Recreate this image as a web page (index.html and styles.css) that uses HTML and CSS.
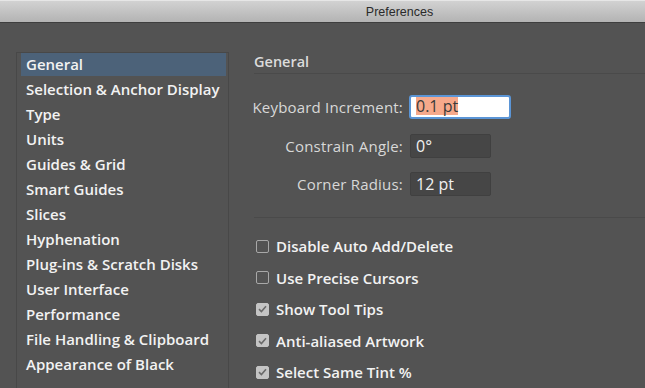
FILE: index.html
```html
<!DOCTYPE html>
<html>
<head>
  <title>Preferences</title>
  <link rel="stylesheet" href="styles.css">
</head>
<body>
  <div class="titlebar"><span>Preferences</span></div>

  <div class="window">
    <ul class="nav">
      <li class="active">General</li>
      <li>Selection &amp; Anchor Display</li>
      <li>Type</li>
      <li>Units</li>
      <li>Guides &amp; Grid</li>
      <li>Smart Guides</li>
      <li>Slices</li>
      <li>Hyphenation</li>
      <li>Plug-ins &amp; Scratch Disks</li>
      <li>User Interface</li>
      <li>Performance</li>
      <li>File Handling &amp; Clipboard</li>
      <li>Appearance of Black</li>
    </ul>

    <div class="panel">
      <h2>General</h2>

      <div class="fields">
        <label for="increment">Keyboard Increment:</label>
        <div class="field focused"><span class="selected">0.1 pt</span></div>

        <label for="angle">Constrain Angle:</label>
        <div class="field">0°</div>

        <label for="radius">Corner Radius:</label>
        <div class="field">12 pt</div>
      </div>

      <div class="options">
        <div class="option"><span class="box"></span>Disable Auto Add/Delete</div>
        <div class="option"><span class="box"></span>Use Precise Cursors</div>
        <div class="option"><span class="box checked"><svg width="9" height="8" viewBox="0 0 9 8"><path d="M1 4.2 L3.4 6.5 L8 1.2" fill="none" stroke="#6a6a6a" stroke-width="1.6"/></svg></span>Show Tool Tips</div>
        <div class="option"><span class="box checked"><svg width="9" height="8" viewBox="0 0 9 8"><path d="M1 4.2 L3.4 6.5 L8 1.2" fill="none" stroke="#6a6a6a" stroke-width="1.6"/></svg></span>Anti-aliased Artwork</div>
        <div class="option"><span class="box checked"><svg width="9" height="8" viewBox="0 0 9 8"><path d="M1 4.2 L3.4 6.5 L8 1.2" fill="none" stroke="#6a6a6a" stroke-width="1.6"/></svg></span>Select Same Tint %</div>
      </div>
    </div>
  </div>
</body>
</html>
```

FILE: styles.css
```css
body {
  margin: 0;
  background-color: #535353;
  font-family: "Open Sans", "Liberation Sans", sans-serif;
  overflow: hidden;
  height: 388px;
}
.titlebar {
  height: 21px;
  border-top: 1px solid #e6e6e6;
  border-bottom: 1px solid #3e3e3e;
  background: linear-gradient(#d2d2d2, #b3b3b3);
  display: flex;
  align-items: center;
  justify-content: center;
  padding-left: 154px;
  font-family: "Liberation Sans", Arial, sans-serif;
  font-size: 12.5px;
  color: #2a2a2a;
}
.window {
  display: flex;
  height: 365px;
  overflow: hidden;
}
.nav {
  list-style: none;
  margin: 29px 0 0 16px;
  padding: 0 2px 0 4px;
  width: 205px;
  border: 1px solid #484848;
  border-bottom: none;
  flex-shrink: 0;
}
.nav li {
  height: 25px;
  line-height: 23px;
  padding-left: 5px;
  font-size: 15px;
  font-weight: 600;
  color: #f2f2f2;
  white-space: nowrap;
}
.nav li.active {
  background-color: #4c6279;
  height: 23px;
  margin-bottom: 2px;
}
.panel {
  flex: 1;
  margin-left: 25px;
  padding-top: 29px;
}
h2 {
  margin: 0;
  height: 21px;
  line-height: 20px;
  font-size: 14.5px;
  font-weight: 600;
  color: #dcdcdc;
  border-bottom: 1px solid #4a4a4a;
}
.fields {
  display: grid;
  grid-template-columns: 149px auto;
  column-gap: 6px;
  row-gap: 14.5px;
  align-items: center;
  justify-items: start;
  margin-top: 21px;
  padding-bottom: 21px;
  border-bottom: 1px solid #4a4a4a;
}
.fields label {
  justify-self: end;
  font-size: 15px;
  letter-spacing: 0.2px;
  color: #d8d8d8;
  white-space: nowrap;
}
.field {
  box-sizing: border-box;
  width: 81px;
  height: 24px;
  margin-left: 1px;
  padding-left: 5px;
  line-height: 22px;
  background-color: #464646;
  border: 1px solid #404040;
  border-radius: 2px;
  font-size: 16px;
  color: #f0f0f0;
}
.field.focused {
  width: 102px;
  margin-left: 0;
  padding-left: 5px;
  background-color: #ffffff;
  border: 2px solid #5b95d6;
  border-radius: 3px;
  line-height: 20px;
  color: #3a3a3a;
}
.selected {
  display: inline-block;
  background-color: #f7a98b;
  line-height: 18px;
  vertical-align: 1px;
}
.options {
  margin-top: 18px;
  display: flex;
  flex-direction: column;
  gap: 11.5px;
}
.option {
  display: flex;
  align-items: center;
  height: 20px;
  font-size: 15px;
  font-weight: 600;
  color: #f2f2f2;
  white-space: nowrap;
}
.box {
  box-sizing: border-box;
  width: 13px;
  height: 13px;
  margin: 0 7px 0 2px;
  border: 1px solid #a8a8a8;
  border-radius: 2px;
  display: flex;
  align-items: center;
  justify-content: center;
}
.box.checked {
  background-color: #c4c4c4;
  border-color: #c4c4c4;
}
```
